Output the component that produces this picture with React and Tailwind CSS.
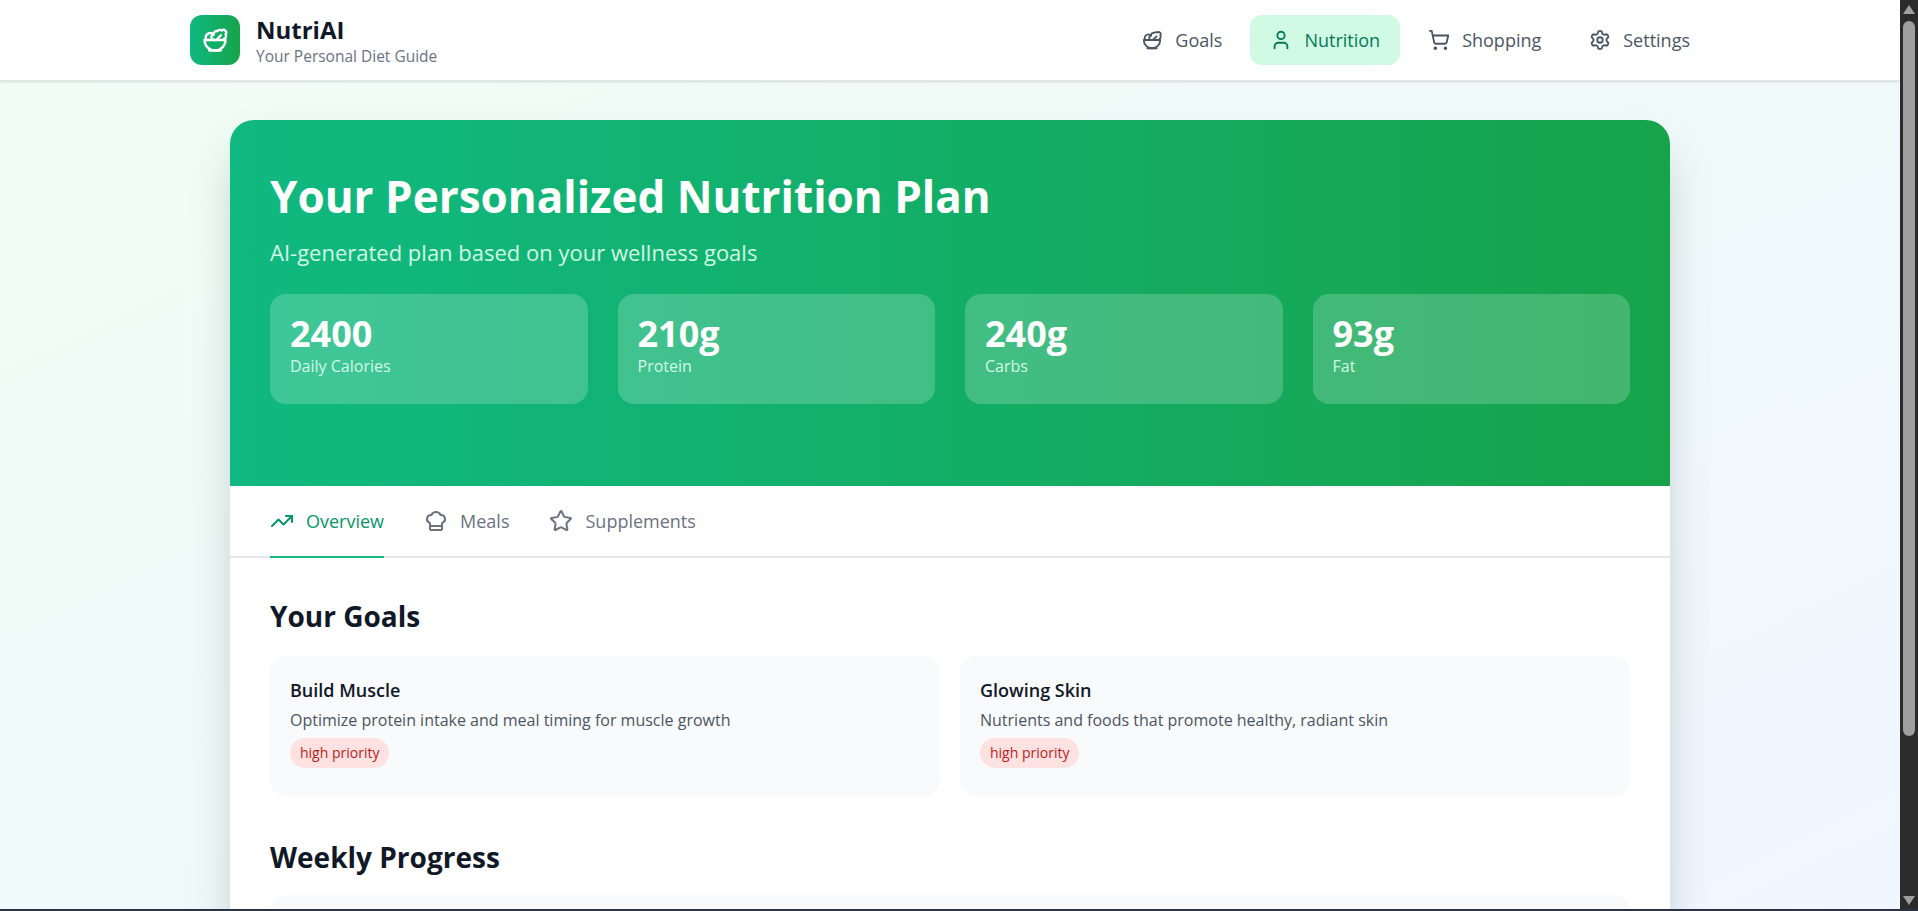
import React from "react";
import { Salad, User, ShoppingCart, Settings, TrendingUp, ChefHat, Star } from "lucide-react";

const nav = [
  { label: "Goals", Icon: Salad },
  { label: "Nutrition", Icon: User, active: true },
  { label: "Shopping", Icon: ShoppingCart },
  { label: "Settings", Icon: Settings },
];
const stats = [
  ["2400", "Daily Calories"],
  ["210g", "Protein"],
  ["240g", "Carbs"],
  ["93g", "Fat"],
];
const tabs = [
  { label: "Overview", Icon: TrendingUp, active: true },
  { label: "Meals", Icon: ChefHat },
  { label: "Supplements", Icon: Star },
];
const goals = [
  ["Build Muscle", "Optimize protein intake and meal timing for muscle growth"],
  ["Glowing Skin", "Nutrients and foods that promote healthy, radiant skin"],
];

export default function App() {
  return (
    <div className="flex h-[911px] w-full overflow-hidden font-['Open_Sans','Noto_Sans',sans-serif] border-b-2 border-[#2b3244]">
      <div className="flex min-w-0 flex-1 flex-col bg-gradient-to-br from-[#f0fdf4] to-[#eff6ff]">
        <header className="h-[81px] shrink-0 border-b border-[#e5e7eb] bg-white shadow-sm">
          <div className="mx-auto flex h-20 w-[1520px] items-center justify-between">
            <div className="flex items-center gap-4">
              <div className="flex h-[50px] w-[50px] items-center justify-center rounded-xl bg-gradient-to-r from-[#10b981] to-[#16a34a]">
                <Salad className="h-7 w-7 text-white" />
              </div>
              <div>
                <div className="text-[24px] font-bold leading-8 text-[#111827]">NutriAI</div>
                <div className="text-[15.5px] leading-5 text-[#6b7280]">Your Personal Diet Guide</div>
              </div>
            </div>
            <nav className="flex items-center gap-2">
              {nav.map(({ label, Icon, active }) => (
                <div
                  key={label}
                  className={
                    active
                      ? "flex h-[50px] items-center gap-3 rounded-xl bg-[#d1fae5] px-5 text-[#047857]"
                      : "flex h-[50px] items-center gap-3 rounded-xl px-5 text-[#4b5563]"
                  }
                >
                  <Icon className="h-[22px] w-[22px]" strokeWidth={2} />
                  <span className="text-[18px] font-medium leading-6">{label}</span>
                </div>
              ))}
            </nav>
          </div>
        </header>
        <main className="flex-1 overflow-hidden pt-[39px]">
          <div className="mx-auto w-[1440px] rounded-t-3xl bg-white shadow-2xl">
            <section className="h-[366px] rounded-t-3xl bg-gradient-to-r from-[#10b981] to-[#16a34a] p-10 text-white">
              <h1 className="pt-[8px] text-[44px] font-bold leading-[56px]">Your Personalized Nutrition Plan</h1>
              <p className="mt-3 text-[22px] leading-8 text-[#d1fae5]">AI-generated plan based on your wellness goals</p>
              <div className="mt-[26px] grid grid-cols-4 gap-[30px]">
                {stats.map(([v, l]) => (
                  <div key={l} className="h-[110px] rounded-2xl bg-white/20 p-5">
                    <div className="text-[36px] font-bold leading-10">{v}</div>
                    <div className="text-[16px] leading-6 text-[#d1fae5]">{l}</div>
                  </div>
                ))}
              </div>
            </section>
            <div className="flex h-[72px] gap-10 border-b-2 border-[#e5e7eb] px-10">
              {tabs.map(({ label, Icon, active }) => (
                <div
                  key={label}
                  className={
                    active
                      ? "-mb-[2px] flex items-center gap-3 border-b-2 border-[#10b981] text-[#059669]"
                      : "flex items-center gap-3 text-[#6b7280]"
                  }
                >
                  <Icon className="h-6 w-6" strokeWidth={2} />
                  <span className="text-[18px] font-medium leading-6">{label}</span>
                </div>
              ))}
            </div>
            <div className="px-10 pt-10">
              <h2 className="text-[28px] font-bold leading-9 text-[#111827]">Your Goals</h2>
              <div className="mt-[22px] grid grid-cols-2 gap-5">
                {goals.map(([t, d]) => (
                  <div key={t} className="h-[140px] rounded-2xl bg-[#f9fafb] p-5">
                    <div className="text-[18px] font-semibold leading-7 text-[#111827]">{t}</div>
                    <div className="mt-1 text-[16px] leading-6 text-[#4b5563]">{d}</div>
                    <span className="mt-[6px] inline-block rounded-full bg-[#fee2e2] px-[10px] py-[4px] text-[14px] font-medium leading-[22px] text-[#b91c1c]">
                      high priority
                    </span>
                  </div>
                ))}
              </div>
              <h2 className="mt-[43px] text-[28px] font-bold leading-9 text-[#111827]">Weekly Progress</h2>
              <div className="mt-[20px] h-40 rounded-2xl bg-[#f9fafb]" />
            </div>
          </div>
        </main>
      </div>
      <aside className="flex w-[18px] shrink-0 flex-col items-center bg-[#2b2b2b]">
        <svg className="mt-[5px] shrink-0" width="14" height="10" viewBox="0 0 14 10"><path d="M7 0 L13 9 L1 9 Z" fill="#9f9f9f" /></svg>
        <div className="mt-[6px] h-[715px] w-[12px] rounded-full bg-[#9f9f9f]" />
        <svg className="mt-auto mb-[3px] shrink-0" width="14" height="10" viewBox="0 0 14 10"><path d="M1 0 L13 0 L7 9 Z" fill="#9f9f9f" /></svg>
      </aside>
    </div>
  );
}
